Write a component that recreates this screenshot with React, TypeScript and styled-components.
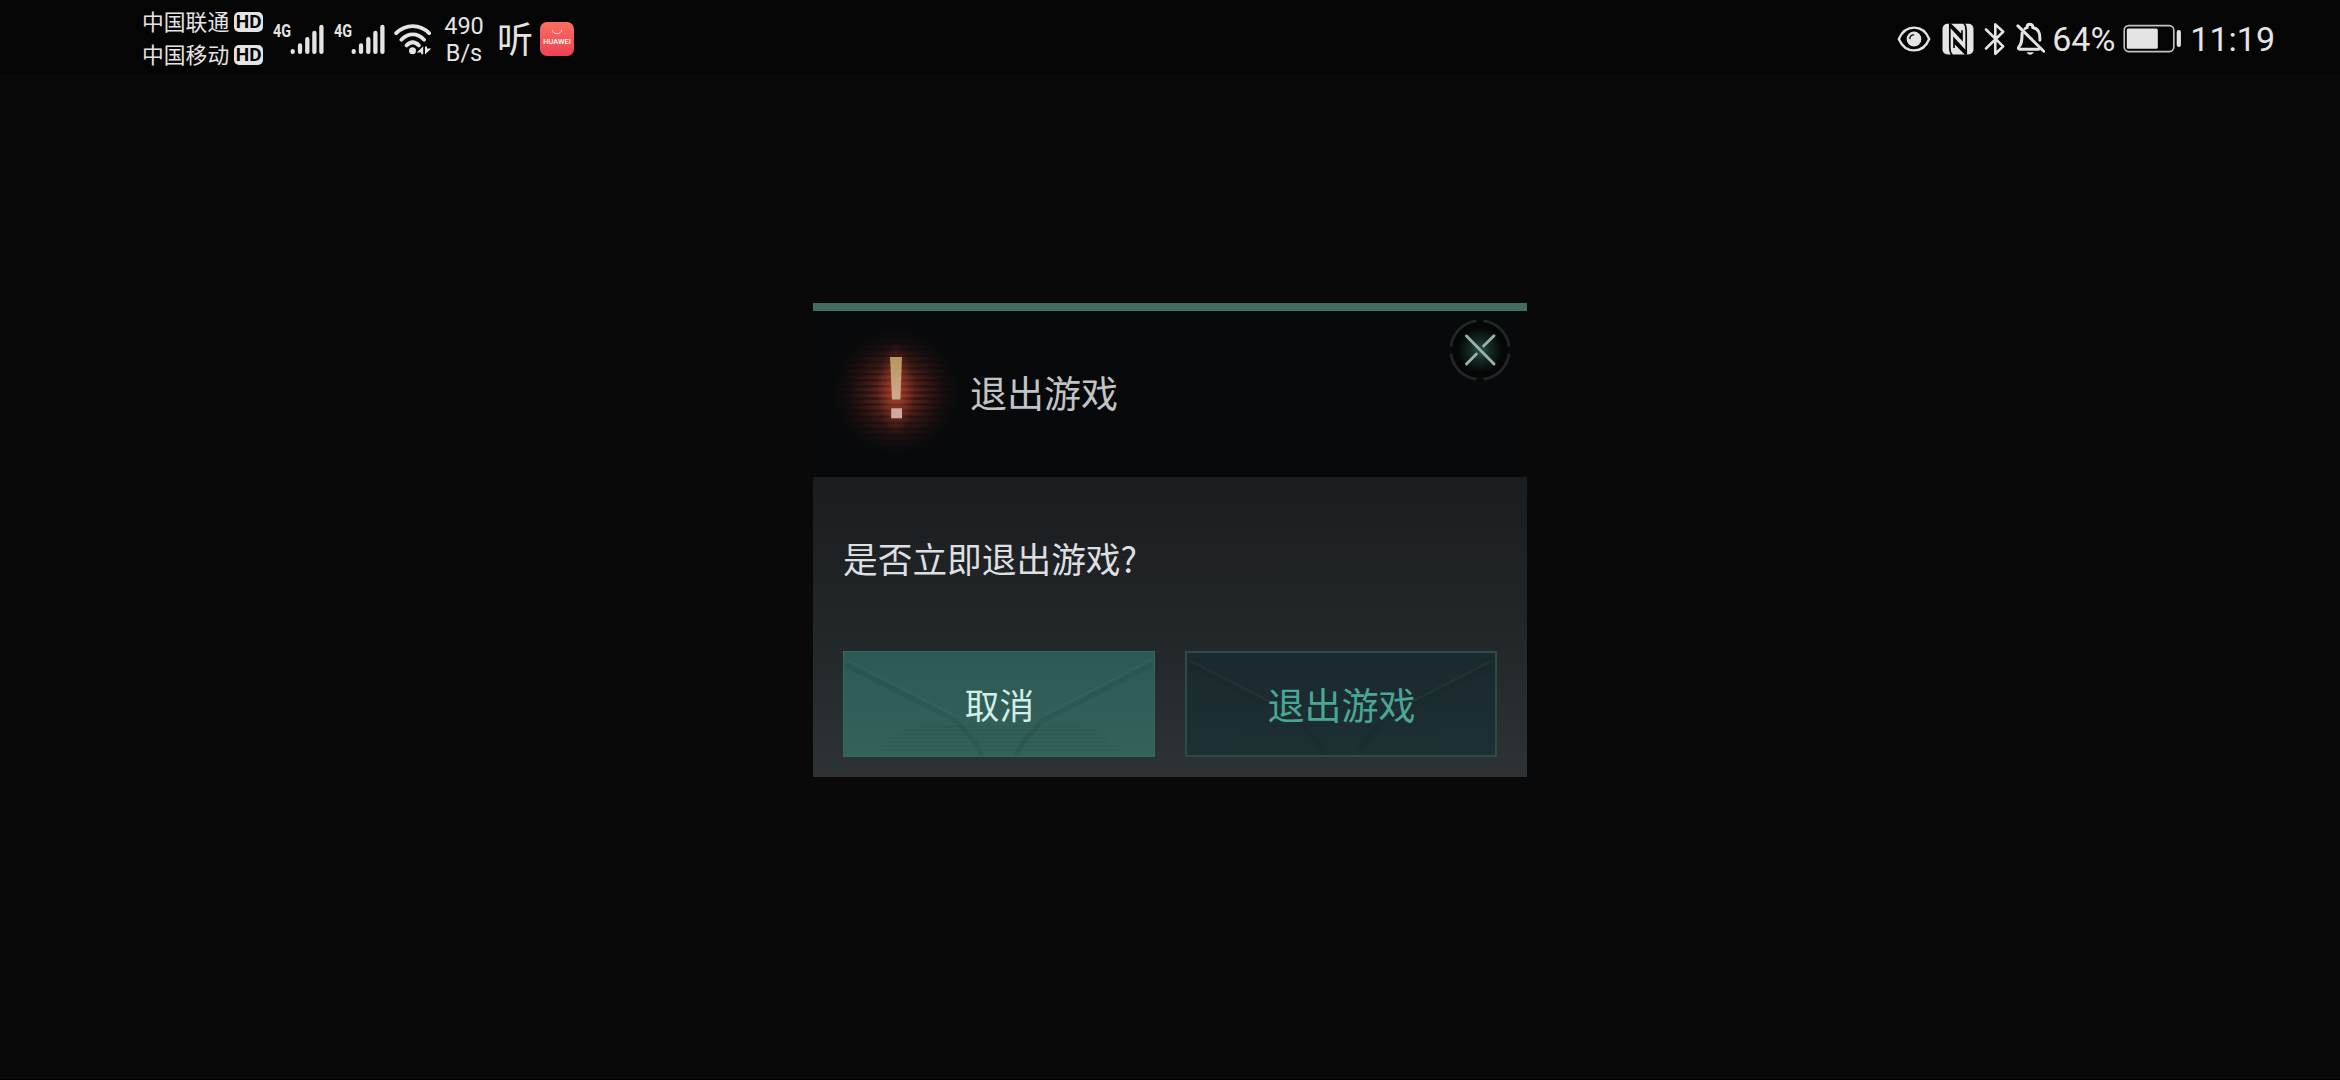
import styled, { createGlobalStyle } from "styled-components";

interface ITextProps {
  $size: number;
  $color?: string;
}

interface IButtonProps {
  $schema: "primary" | "outline";
}

const SignalIcon = () => (
  <svg width="34" height="32" viewBox="0 0 34 32" fill="none">
    <path
      d="M2.7 28.2V28.9M10 22.4V28.9M17.3 16.2V28.9M24.4 10V28.9M31.4 4V28.9"
      stroke="#e4e4e4"
      strokeWidth="4.3"
      strokeLinecap="round"
    />
  </svg>
);

const WifiIcon = () => (
  <svg width="38" height="32" viewBox="0 0 38 32" fill="none">
    <path
      d="M2.2 10.2C11.5 0.7 26 0.7 35.2 10.2M7.4 16.7C14.1 9.6 23.4 9.6 30.1 16.7M12.6 22.4C16.6 18.2 20.8 18.2 24.8 22.4"
      stroke="#e4e4e4"
      strokeWidth="3.8"
      strokeLinecap="round"
    />
    <circle cx="18.5" cy="27.8" r="3.5" fill="#e4e4e4" />
    <path
      d="M29.2 23.2V31.2H27.2V29.4H22.8ZM31 31.6V23.6H33V25.4H37.4Z"
      fill="#e4e4e4"
    />
  </svg>
);

const EyeIcon = () => (
  <svg width="34" height="28" viewBox="0 0 34 28" fill="none">
    <path
      d="M1.8 14C8.3-1.2 26-1.2 32.2 14C26 29.2 8.3 29.2 1.8 14Z"
      stroke="#e4e4e4"
      strokeWidth="2.4"
      strokeLinejoin="round"
    />
    <circle cx="17" cy="14" r="7.4" fill="#e4e4e4" />
    <path
      d="M12.8 13.6C13 11.6 14.4 10 16.6 9.9"
      stroke="#050505"
      strokeWidth="1.4"
      strokeLinecap="round"
    />
  </svg>
);

const NfcIcon = () => (
  <svg width="32" height="32" viewBox="0 0 32 32">
    <rect x="0.5" y="0.7" width="31" height="30.8" rx="5" fill="#e4e4e4" />
    <path
      d="M7.8 1V25C7.8 28 8.6 30.5 10.2 32M24.2 31V7.2C24.2 4.2 23.4 1.6 21.8 0"
      fill="none"
      stroke="#050505"
      strokeWidth="1.7"
    />
    <path
      d="M7 0.5H9L19.2 10.6V7.2H20.8V18.6L7 3.6ZM25 31.7H23L12.8 21.6V25H11.2V13.6L25 28.6Z"
      fill="#050505"
    />
  </svg>
);

const BluetoothIcon = () => (
  <svg width="22" height="34" viewBox="0 0 22 34" fill="none">
    <path
      d="M2 7.5L19.2 24.4L11.3 31.8V2.4L19.2 9.8L2 26.5"
      stroke="#e4e4e4"
      strokeWidth="2.6"
      strokeLinecap="round"
      strokeLinejoin="round"
    />
  </svg>
);

const BellOffIcon = () => (
  <svg width="30" height="34" viewBox="0 0 30 34" fill="none">
    <path
      d="M6.1 11.3C5.8 18.2 6.1 21.6 2.9 24.9C1.9 26 2.4 27.3 3.8 27.3H22.6M11.2 5.5V4.6C11.2 1.5 16.8 1.5 16.8 4.6V5.5C22.6 7 24.2 10.7 23.9 18.3M11.2 5.5L9.1 6.5"
      stroke="#e4e4e4"
      strokeWidth="3"
      strokeLinecap="round"
    />
    <path
      d="M1.9 3.9L27.7 29.2"
      stroke="#e4e4e4"
      strokeWidth="3"
      strokeLinecap="round"
    />
    <path d="M10.6 30.3H17.8C16.4 33.5 12 33.5 10.6 30.3Z" fill="#e4e4e4" />
  </svg>
);

const BatteryIcon = () => (
  <svg width="59" height="30" viewBox="0 0 59 30">
    <rect
      x="1.2"
      y="1.6"
      width="49.6"
      height="26"
      rx="4.5"
      fill="none"
      stroke="#c4c4c4"
      strokeWidth="1.6"
    />
    <rect x="3.8" y="4.6" width="31" height="20.2" rx="1.5" fill="#e4e4e4" />
    <rect x="53.7" y="6" width="4.2" height="17" rx="2" fill="#e4e4e4" />
  </svg>
);

const AlertIcon = () => (
  <svg width="150" height="166" viewBox="0 0 150 166">
    <defs>
      <radialGradient id="glow">
        <stop offset="0" stopColor="#a93e2b" stopOpacity="0.9" />
        <stop offset="0.3" stopColor="#7a2c22" stopOpacity="0.72" />
        <stop offset="0.62" stopColor="#451b17" stopOpacity="0.46" />
        <stop offset="1" stopColor="#1a0c0b" stopOpacity="0" />
      </radialGradient>
      <radialGradient id="core">
        <stop offset="0" stopColor="#bd4a30" stopOpacity="0.7" />
        <stop offset="1" stopColor="#9a3425" stopOpacity="0" />
      </radialGradient>
      <linearGradient id="mark" x1="0" y1="0" x2="0" y2="1">
        <stop offset="0" stopColor="#b8955f" />
        <stop offset="1" stopColor="#ceab93" />
      </linearGradient>
      <pattern id="lines" width="6" height="6.1" patternUnits="userSpaceOnUse">
        <rect y="1" width="6" height="2.4" fill="#07090a" opacity="0.42" />
      </pattern>
    </defs>
    <ellipse cx="82" cy="81" rx="67" ry="67" fill="url(#glow)" />
    <rect x="10" y="10" width="140" height="142" fill="url(#lines)" />
    <ellipse cx="82" cy="78" rx="19" ry="46" fill="url(#core)" />
    <path d="M76 46H88L86.4 88.5H78Z" fill="url(#mark)" />
    <rect x="77.2" y="97.3" width="10.8" height="10" fill="#ceaaa0" />
  </svg>
);

const CloseIcon = () => (
  <svg width="64" height="64" viewBox="0 0 64 64" fill="none">
    <defs>
      <radialGradient id="closeGlow">
        <stop offset="0" stopColor="#2c5148" />
        <stop offset="0.35" stopColor="#142a25" />
        <stop offset="0.8" stopColor="#040807" />
        <stop offset="1" stopColor="#030605" />
      </radialGradient>
    </defs>
    <circle cx="32" cy="32" r="28" fill="url(#closeGlow)" />
    <circle
      cx="32"
      cy="32"
      r="29.3"
      stroke="#1f2826"
      strokeWidth="2.8"
      pathLength="360"
      strokeDasharray="76 14"
      strokeDashoffset="-7"
    />
    <path
      d="M18.5 18L46 46M18.5 46L28.4 36M35.6 28L46 17.7"
      stroke="#9bb0ab"
      strokeWidth="2.9"
      strokeLinecap="round"
    />
  </svg>
);

const ButtonPattern = () => (
  <PatternStyle viewBox="0 0 312 106" preserveAspectRatio="none">
    <path
      d="M2 13L112 70L132 92L139 106M310 13L200 70L180 92L173 106"
      fill="none"
      stroke="#08201f"
      strokeWidth="5"
      strokeLinejoin="round"
      opacity="0.09"
    />
    <path
      d="M3 8L110 64M309 8L202 64"
      stroke="#7ac0ae"
      strokeWidth="2"
      opacity="0.05"
    />
    <path
      d="M75 76H237M60 80H252M55 84H257M50 88H262M45 92H267M40 96H272M35 100H277"
      stroke="#062622"
      strokeWidth="1.5"
      opacity="0.08"
    />
  </PatternStyle>
);

const Signal = () => (
  <SignalStyle>
    <span>4G</span>
    <SignalIcon />
  </SignalStyle>
);

const StatusBar = () => (
  <StatusBarStyle>
    <div className="left">
      <Carriers>
        {["中国联通", "中国移动"].map((name) => (
          <Carrier key={name}>
            <span>{name}</span>
            <HdBadge>HD</HdBadge>
          </Carrier>
        ))}
      </Carriers>
      <Signal />
      <Signal />
      <WifiIcon />
      <NetSpeed>
        <span>490</span>
        <span>B/s</span>
      </NetSpeed>
      <ListenMark>听</ListenMark>
      <AppBadge>
        <svg width="12" height="6" viewBox="0 0 12 6" fill="none">
          <path d="M1.2 .8C2 6 10 6 10.8 .8" stroke="#ffd9d4" />
        </svg>
        <span>HUAWEI</span>
      </AppBadge>
    </div>
    <div className="right">
      <EyeIcon />
      <NfcIcon />
      <BluetoothIcon />
      <BellOffIcon />
      <StatusText>64%</StatusText>
      <BatteryIcon />
      <StatusText>11:19</StatusText>
    </div>
  </StatusBarStyle>
);

const ExitDialog = () => (
  <DialogStyle>
    <DialogHeader>
      <AlertIcon />
      <Text as="h1" $size={37} $color="#c2c3c4">
        退出游戏
      </Text>
      <CloseButton aria-label="关闭">
        <CloseIcon />
      </CloseButton>
    </DialogHeader>
    <DialogBody>
      <Text $size={34.7}>是否立即退出游戏?</Text>
      <Actions>
        <ActionButton $schema="primary">
          <ButtonPattern />
          <Text as="span" $size={34.7} $color="#d3eee6">
            取消
          </Text>
        </ActionButton>
        <ActionButton $schema="outline">
          <ButtonPattern />
          <Text as="span" $size={37} $color="#4ba695">
            退出游戏
          </Text>
        </ActionButton>
      </Actions>
    </DialogBody>
  </DialogStyle>
);

const App = () => {
  return (
    <>
      <GlobalStyle />
      <Screen>
        <StatusBar />
        <Stage>
          <ExitDialog />
        </Stage>
      </Screen>
    </>
  );
};

const GlobalStyle = createGlobalStyle`
  * {
    box-sizing: border-box;
  }

  body {
    margin: 0;
    background: #090909;
    font-family: Roboto, "Noto Sans CJK SC", sans-serif;
  }

  svg {
    display: block;
    flex-shrink: 0;
  }
`;

const Screen = styled.div`
  display: flex;
  flex-direction: column;
  width: 2340px;
  height: 1080px;
  overflow: hidden;
  background: #090909;
  border-bottom: 1px solid #020202;
`;

const StatusBarStyle = styled.header`
  display: flex;
  justify-content: space-between;
  height: 74px;
  padding: 0 65px 0 142px;
  background: #050505;
  color: #e4e4e4;

  .left,
  .right {
    display: flex;
    align-items: center;
    height: 77px;
  }

  .right > svg:nth-child(1) {
    margin-right: 11px;
  }

  .right > svg:nth-child(2) {
    margin-right: 10px;
  }

  .right > svg:nth-child(3) {
    margin-right: 10px;
  }

  .right > svg:nth-child(4) {
    margin-right: 6px;
  }
`;

const Carriers = styled.div`
  display: flex;
  flex-direction: column;
  width: 130px;
`;

const Carrier = styled.div`
  display: flex;
  align-items: center;
  gap: 5px;
  height: 33px;
  font-family: "Noto Sans CJK SC", sans-serif;
  font-size: 21.8px;
  line-height: 30px;
  white-space: nowrap;

  span:first-child {
    padding-bottom: 3px;
  }
`;

const HdBadge = styled.span`
  width: 29px;
  height: 20px;
  border-radius: 5px;
  background: #e4e4e4;
  color: #050505;
  font-family: Roboto, sans-serif;
  font-size: 19px;
  font-weight: 700;
  line-height: 20px;
  text-align: center;
`;

const SignalStyle = styled.div`
  display: flex;
  width: 61px;

  span {
    width: 17px;
    margin-left: 1px;
    font-family: Roboto, sans-serif;
    font-size: 18px;
    font-weight: 700;
    line-height: 16px;
    transform: scaleX(0.8);
    transform-origin: left;
  }
`;

const NetSpeed = styled.div`
  display: flex;
  flex-direction: column;
  width: 60px;
  margin-left: 2px;
  padding-top: 2px;
  font-family: Roboto, sans-serif;
  font-size: 23.5px;
  line-height: 27px;
  text-align: center;
`;

const ListenMark = styled.span`
  width: 36px;
  margin-left: 3px;
  padding-bottom: 3px;
  font-family: "Noto Sans CJK SC", sans-serif;
  font-size: 36px;
  line-height: 36px;
`;

const AppBadge = styled.div`
  display: flex;
  flex-direction: column;
  align-items: center;
  width: 34px;
  height: 34px;
  margin-left: 7px;
  padding-top: 7px;
  border-radius: 7px;
  background: linear-gradient(#fb6e62, #ed4255);
  color: #fff;

  span {
    margin-top: 3px;
    font-family: Roboto, sans-serif;
    font-size: 7.4px;
    font-weight: 500;
    line-height: 8px;
  }
`;

const StatusText = styled.span`
  font-family: Roboto, sans-serif;
  font-size: 34px;
  line-height: 40px;
  margin-right: 8px;

  &:last-child {
    margin: 0 0 0 8px;
  }
`;

const Stage = styled.main`
  display: flex;
  justify-content: center;
  align-items: flex-start;
  padding-top: 229px;
`;

const DialogStyle = styled.section`
  width: 714px;
  height: 474px;
  border-top: 8px solid #406e63;
`;

const DialogHeader = styled.div`
  display: flex;
  align-items: center;
  height: 166px;
  padding-left: 1px;
  background: #07090b;

  h1 {
    margin-left: 6px;
    padding-bottom: 4px;
  }
`;

const CloseButton = styled.button`
  align-self: flex-start;
  margin: 7px 15px 0 auto;
  padding: 0;
  border: 0;
  background: none;
`;

const DialogBody = styled.div`
  height: 300px;
  padding: 55px 30px 0;
  background: repeating-linear-gradient(
      transparent 0 5px,
      rgba(255, 255, 255, 0.005) 5px 8px
    ),
    linear-gradient(#1a1d1f, #212629 50%, #2d3236);
`;

const Text = styled.p<ITextProps>`
  margin: 0;
  color: ${({ $color }) => $color || "#dedfe0"};
  font-family: "Noto Sans CJK SC", sans-serif;
  font-size: ${({ $size }) => $size}px;
  font-weight: 400;
  line-height: 52px;
  white-space: nowrap;
`;

const Actions = styled.div`
  display: flex;
  gap: 30px;
  margin-top: 67px;
`;

const ActionButton = styled.button<IButtonProps>`
  position: relative;
  width: 312px;
  height: 106px;
  padding: 0 0 1px 1px;
  border: ${({ $schema }) =>
    $schema === "primary" ? "1px solid #37675f" : "2px solid #2d4b47"};
  background: ${({ $schema }) =>
    $schema === "primary"
      ? "linear-gradient(#2d5954, #34625b)"
      : "linear-gradient(#1a292d, #1d3033)"};

  span {
    position: relative;
  }
`;

const PatternStyle = styled.svg`
  position: absolute;
  inset: 0;
  width: 100%;
  height: 100%;
`;

export default App;
